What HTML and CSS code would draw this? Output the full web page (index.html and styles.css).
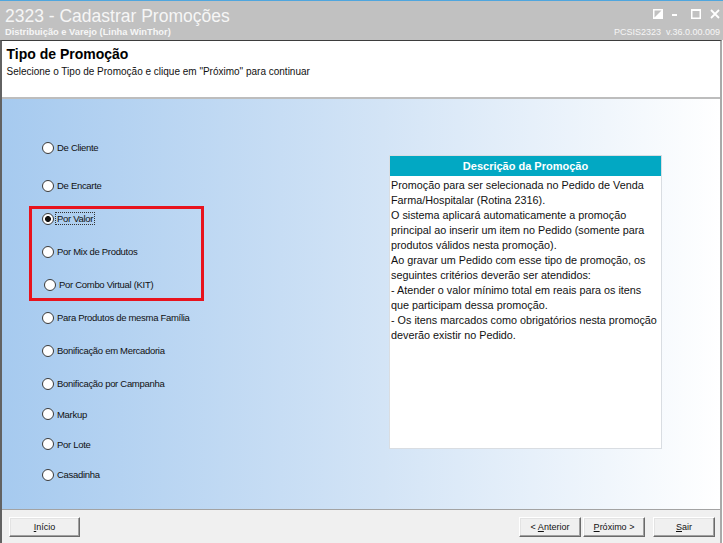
FILE: index.html
```html
<!DOCTYPE html>
<html lang="pt-BR">

<head>
  <meta charset="UTF-8">
  <meta name="viewport" content="width=device-width, initial-scale=1.0">
  <title>2323 - Cadastrar Promoções</title>

  <link rel="stylesheet" href="styles.css">

</head>

<body>
  <div class="window">
    <!-- barra de titulo -->
    <div class="titlebar">
      <div class="app-title">
        <div class="app-name">2323 - Cadastrar Promoções</div>
        <div class="app-line">Distribuição e Varejo (Linha WinThor)</div>
      </div>
      <div class="app-meta">
        <div class="win-buttons">
          <svg width="10" height="10" viewBox="0 0 10 10">
            <rect x="0.75" y="0.75" width="8.5" height="8.5" fill="none" stroke="#fff" stroke-width="1.5" />
            <polygon points="9,1 9,9 1,9" fill="#fff" />
          </svg>
          <svg width="10" height="10" viewBox="0 0 10 10">
            <rect x="0" y="5" width="5" height="2" fill="#fff" />
          </svg>
          <svg width="10" height="10" viewBox="0 0 10 10">
            <rect x="0.75" y="1" width="8.5" height="8.25" fill="none" stroke="#fff" stroke-width="1.5" />
            <rect x="0" y="0" width="10" height="2" fill="#fff" />
          </svg>
          <svg width="10" height="10" viewBox="0 0 10 10">
            <path d="M1 1 L9 9 M9 1 L1 9" stroke="#fff" stroke-width="1.8" />
          </svg>
        </div>
        <div class="app-version">PCSIS2323&nbsp; v.36.0.00.009</div>
      </div>
    </div>

    <div class="frame">
      <div class="page-head">
        <h1>Tipo de Promoção</h1>
        <p>Selecione o Tipo de Promoção e clique em "Próximo" para continuar</p>
      </div>

      <div class="wizard-body">
        <div class="options">
          <label class="opt opt-first"><input type="radio" name="tipo"><span>De Cliente</span></label>
          <label class="opt"><input type="radio" name="tipo"><span>De Encarte</span></label>
          <!-- marcacao em vermelho -->
          <div class="marked">
            <label class="opt"><input type="radio" name="tipo" checked><span class="focus">Por Valor</span></label>
            <label class="opt"><input type="radio" name="tipo"><span>Por Mix de Produtos</span></label>
            <label class="opt opt-nudge"><input type="radio" name="tipo"><span>Por Combo Virtual (KIT)</span></label>
          </div>
          <label class="opt"><input type="radio" name="tipo"><span>Para Produtos de mesma Família</span></label>
          <label class="opt"><input type="radio" name="tipo"><span>Bonificação em Mercadoria</span></label>
          <label class="opt"><input type="radio" name="tipo"><span>Bonificação por Campanha</span></label>
          <label class="opt opt-short"><input type="radio" name="tipo"><span>Markup</span></label>
          <label class="opt opt-short"><input type="radio" name="tipo"><span>Por Lote</span></label>
          <label class="opt opt-short"><input type="radio" name="tipo"><span>Casadinha</span></label>
        </div>

        <div class="desc">
          <div class="desc-title">Descrição da Promoção</div>
          <div class="desc-text">
            Promoção para ser selecionada no Pedido de Venda Farma/Hospitalar (Rotina 2316).<br>
            O sistema aplicará automaticamente a promoção principal ao inserir um item no Pedido (somente para produtos válidos nesta promoção).<br>
            Ao gravar um Pedido com esse tipo de promoção, os seguintes critérios deverão ser atendidos:<br>
            - Atender o valor mínimo total em reais para os itens que participam dessa promoção.<br>
            - Os itens marcados como obrigatórios nesta promoção deverão existir no Pedido.
          </div>
        </div>
      </div>

      <div class="footer">
        <button class="btn btn-start"><u>I</u>nício</button>
        <div class="nav">
          <button class="btn">&lt; <u>A</u>nterior</button>
          <button class="btn"><u>P</u>róximo &gt;</button>
          <button class="btn btn-exit"><u>S</u>air</button>
        </div>
      </div>
    </div>
  </div>
</body>

</html>
```

FILE: styles.css
```css
html,
body {
  margin: 0;
  padding: 0;
  background: #fff;
}

.window {
  width: 723px;
  height: 543px;
  display: flex;
  flex-direction: column;
  font-family: "Liberation Sans", Arial, sans-serif;
}

/* barra de titulo */
.titlebar {
  box-sizing: border-box;
  height: 40px;
  border-top: 1px solid #4fa6de;
  background: #c1c1c1;
  color: #f6f6f6;
  display: flex;
  justify-content: space-between;
  padding: 0 3px 0 5px;
  flex-shrink: 0;
}

.app-name {
  font-size: 17.5px;
  line-height: 20px;
  padding-top: 5px;
}

.app-line {
  font-size: 9.3px;
  font-weight: bold;
  line-height: 11px;
  margin-top: 1px;
}

.app-meta {
  display: flex;
  flex-direction: column;
  align-items: flex-end;
  padding-top: 8px;
}

.win-buttons {
  display: flex;
  gap: 9px;
  height: 10px;
}

.win-buttons svg {
  display: block;
}

.app-version {
  font-size: 9px;
  line-height: 11px;
  margin-top: 8px;
}

/* moldura */
.frame {
  flex: 1;
  display: flex;
  flex-direction: column;
  border-top: 1px solid #3d3d3d;
  border-left: 2px solid #626262;
  border-right: 2px solid #a9a9a9;
  margin-right: 1px;
  min-height: 0;
}

.page-head {
  height: 58px;
  box-sizing: border-box;
  padding: 5px 0 0 4.5px;
  background: #fff;
  border-bottom: 2px solid #bdbdbd;
  flex-shrink: 0;
}

.page-head h1 {
  margin: 0;
  font-size: 14px;
  line-height: 17px;
  color: #000;
}

.page-head p {
  margin: 2px 0 0;
  font-size: 10px;
  line-height: 13px;
  color: #111;
}

/* area central */
.wizard-body {
  height: 410px;
  flex-shrink: 0;
  display: grid;
  grid-template-columns: 387px 273px;
  background: linear-gradient(to right, #a6caef, #d3e4f6 53%, #ffffff 100%);
}

.options {
  display: flex;
  flex-direction: column;
  gap: 20px;
  padding: 42px 0 0 40px;
}

.marked {
  position: relative;
  display: flex;
  flex-direction: column;
  gap: 20px;
}

.marked::after {
  content: "";
  position: absolute;
  left: -13px;
  top: -6px;
  width: 175px;
  height: 95px;
  box-sizing: border-box;
  border: 3px solid #e8131d;
}

.opt {
  display: flex;
  align-items: center;
  height: 13px;
  font-size: 9.5px;
  letter-spacing: -0.3px;
  color: #111;
  white-space: nowrap;
}

.opt-first {
  margin-bottom: 5.3px;
}

.opt-short {
  margin-top: -2.7px;
}

.opt-nudge {
  padding-left: 2px;
}

.opt input {
  appearance: none;
  -webkit-appearance: none;
  box-sizing: border-box;
  width: 12px;
  height: 12px;
  margin: 0 1px 0 0;
  border: 1px solid #3a3a3a;
  border-radius: 50%;
  background: #fff;
  flex-shrink: 0;
}

.opt input:checked {
  background: radial-gradient(circle, #111 0 2.6px, #fff 3.3px);
}

.opt span {
  padding: 0 1px;
  border: 1px solid transparent;
  line-height: 11px;
}

.opt span.focus {
  border: 1px dotted #333;
}

/* quadro de descricao */
.desc {
  margin-top: 56px;
  height: 294px;
  box-sizing: border-box;
  background: #fff;
  border: 1px solid #d9dde2;
}

.desc-title {
  height: 20px;
  background: #02a8c3;
  color: #fff;
  font-size: 11px;
  font-weight: bold;
  line-height: 20px;
  text-align: center;
}

.desc-text {
  padding: 1.5px 0 0 1px;
  font-size: 10.8px;
  line-height: 15px;
  color: #111;
}

/* rodape */
.footer {
  flex: 1;
  display: flex;
  justify-content: space-between;
  align-items: flex-start;
  padding: 7px 5px 0 7px;
  background: #f0f0f0;
  border-top: 1px solid #a3a3a3;
}

.nav {
  display: flex;
  gap: 2px;
}

.btn {
  box-sizing: border-box;
  width: 62px;
  height: 20px;
  padding: 0;
  font-family: "Liberation Sans", Arial, sans-serif;
  font-size: 9px;
  color: #111;
  background: #f0f0f0;
  border: 1px solid;
  border-color: #fff #6a6a6a #6a6a6a #fff;
  box-shadow: inset -1px -1px #a0a0a0, inset 1px 1px #e3e3e3;
}

.btn-start {
  width: 71px;
}

.btn-exit {
  margin-left: 6px;
}
```
